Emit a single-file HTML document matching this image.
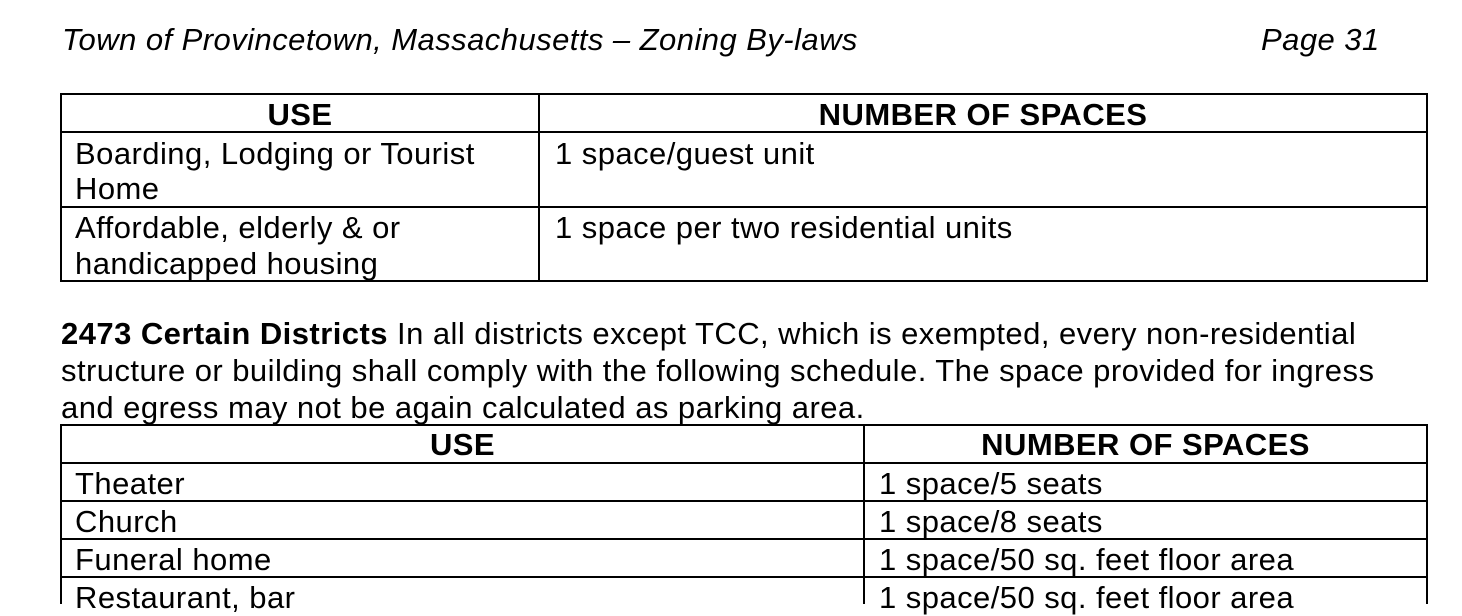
<!DOCTYPE html>
<html><head><meta charset="utf-8"><style>
body{margin:0;width:1462px;height:604px;background:#fff;overflow:hidden;position:relative;font-family:"Liberation Sans",Arial,sans-serif;color:#000;}
.a{position:absolute;white-space:nowrap;font-size:31px;letter-spacing:0.45px;line-height:37px;}
.h{position:absolute;background:#000;}
.b{font-weight:bold;}
.i{font-style:italic;}
</style></head><body>
<div class="a i" style="left:62px;top:21px;">Town of Provincetown, Massachusetts – Zoning By-laws</div>
<div class="a i" style="left:1261px;top:21px;">Page 31</div>

<div class="h" style="left:60px;top:93px;width:1368px;height:2px"></div>
<div class="h" style="left:60px;top:131px;width:1368px;height:2px"></div>
<div class="h" style="left:60px;top:206px;width:1368px;height:2px"></div>
<div class="h" style="left:60px;top:280px;width:1368px;height:2px"></div>
<div class="h" style="left:60px;top:93px;width:2px;height:189px"></div>
<div class="h" style="left:538px;top:93px;width:2px;height:189px"></div>
<div class="h" style="left:1426px;top:93px;width:2px;height:189px"></div>
<div class="a b" style="left:62px;width:476px;text-align:center;top:96px;">USE</div>
<div class="a b" style="left:540px;width:886px;text-align:center;top:96px;">NUMBER OF SPACES</div>
<div class="a" style="left:75px;top:136px;line-height:35px">Boarding, Lodging or Tourist<br>Home</div>
<div class="a" style="left:555px;top:136px;line-height:35px">1 space/guest unit</div>
<div class="a" style="left:75px;top:210px;line-height:36px">Affordable, elderly &amp; or<br>handicapped housing</div>
<div class="a" style="left:555px;top:210px;line-height:36px">1 space per two residential units</div>

<div class="a" style="left:61px;top:315px;"><b>2473 Certain Districts</b> In all districts except TCC, which is exempted, every non-residential<br>structure or building shall comply with the following schedule. The space provided for ingress<br>and egress may not be again calculated as parking area.</div>

<div class="h" style="left:60px;top:424px;width:1368px;height:2px"></div>
<div class="h" style="left:60px;top:462px;width:1368px;height:2px"></div>
<div class="h" style="left:60px;top:500px;width:1368px;height:2px"></div>
<div class="h" style="left:60px;top:538px;width:1368px;height:2px"></div>
<div class="h" style="left:60px;top:576px;width:1368px;height:2px"></div>
<div class="h" style="left:60px;top:424px;width:2px;height:180px"></div>
<div class="h" style="left:863px;top:424px;width:2px;height:180px"></div>
<div class="h" style="left:1426px;top:424px;width:2px;height:180px"></div>
<div class="a b" style="left:62px;width:801px;text-align:center;top:426px;">USE</div>
<div class="a b" style="left:865px;width:561px;text-align:center;top:426px;">NUMBER OF SPACES</div>
<div class="a" style="left:75px;top:465px;">Theater</div>
<div class="a" style="left:879px;top:465px;">1 space/5 seats</div>
<div class="a" style="left:75px;top:503px;">Church</div>
<div class="a" style="left:879px;top:503px;">1 space/8 seats</div>
<div class="a" style="left:75px;top:541px;">Funeral home</div>
<div class="a" style="left:879px;top:541px;">1 space/50 sq. feet floor area</div>
<div class="a" style="left:75px;top:579px;">Restaurant, bar</div>
<div class="a" style="left:879px;top:579px;">1 space/50 sq. feet floor area</div>
</body></html>
